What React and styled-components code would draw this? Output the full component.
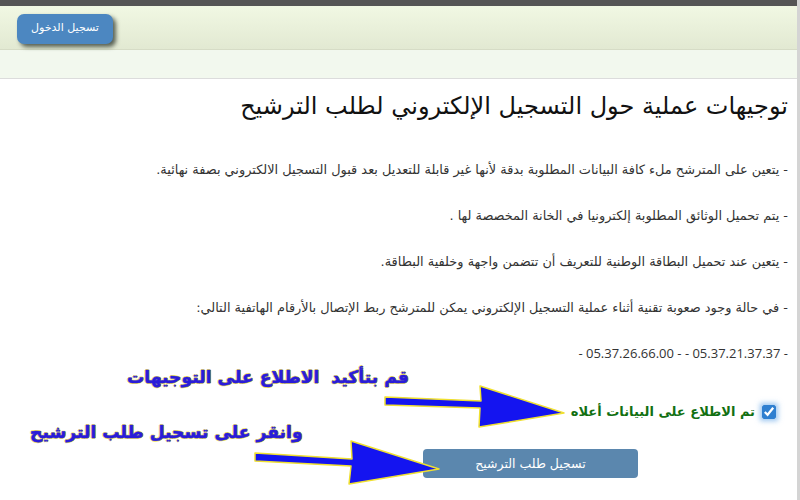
import React, { useState } from 'react';
import styled, { createGlobalStyle } from 'styled-components';

const GlobalStyle = createGlobalStyle`
  html, body {
    margin: 0;
    padding: 0;
    background: #ffffff;
  }
  body {
    font-family: "DejaVu Sans", "Noto Sans", sans-serif;
    width: 800px;
    height: 500px;
    overflow: hidden;
  }
`;

const Page = styled.div`
  position: relative;
  width: 797px;
  height: 500px;
  border-right: 3px solid #d4d4d4;
  background: #fff;
`;

const TopStrip = styled.div`
  height: 6px;
  background: #555555;
`;

const Header = styled.header`
  height: 44px;
  display: flex;
  align-items: flex-start;
  padding: 8px 0 0 17px;
  box-sizing: border-box;
  background: linear-gradient(#f1f8e3, #e2e9d2);
  border-bottom: 1px solid #d6dcc6;
`;

const LoginButton = styled.button`
  width: 96px;
  height: 30px;
  border: none;
  border-radius: 7px;
  background: #4c87c1;
  color: #fff;
  font-family: "DejaVu Sans", sans-serif;
  font-size: 11px;
  padding: 0 0 4px;
  box-shadow: 3px 3px 4px rgba(40, 50, 40, 0.75);
  cursor: pointer;
`;

const SubBar = styled.div`
  height: 28px;
  background: #f2f8ee;
  border-bottom: 1px solid #dcdcdc;
`;

const Content = styled.main`
  direction: rtl;
  padding: 10px 9px 0 0;
`;

const Title = styled.h1`
  margin: 0 0 36px;
  font-size: 24px;
  font-weight: normal;
  color: #111;
  line-height: 34px;
`;

const Para = styled.p`
  margin: 0 0 25px;
  font-size: 12.9px;
  line-height: 21px;
  color: #333;
`;

const Phones = styled(Para)`
  direction: ltr;
  text-align: right;
  font-family: "Open Sans", "DejaVu Sans", sans-serif;
  font-size: 13px;
  margin-bottom: 40px;
`;

const AgreeRow = styled.label`
  display: flex;
  align-items: center;
  gap: 7px;
  padding-right: 12px;
  color: #127012;
  font-weight: bold;
  font-size: 13px;
  cursor: pointer;
`;

const Check = styled.input`
  width: 14px;
  height: 14px;
  margin: 0;
  accent-color: #2f7fd0;
  box-shadow: 0 0 5px 2px rgba(90, 160, 230, 0.6);
`;

const SubmitRow = styled.div`
  display: flex;
  padding: 30px 150px 0 0;
`;

const SubmitButton = styled.button`
  width: 215px;
  height: 29px;
  border: none;
  border-radius: 4px;
  background: #5b87ae;
  color: #fff;
  font-family: "DejaVu Sans", sans-serif;
  font-size: 12.5px;
  cursor: pointer;
`;

const Note = styled.div`
  position: absolute;
  left: ${p => p.x}px;
  top: ${p => p.y}px;
  direction: rtl;
  font-family: "DejaVu Sans", sans-serif;
  font-weight: bold;
  font-size: 17.2px;
  color: #2a1cd8;
  white-space: nowrap;
  text-shadow: 1px 0 0 #f2e45a, -1px 0 0 #f2e45a, 0 1px 0 #f2e45a, 0 -1px 0 #f2e45a;
  -webkit-text-stroke: 0.6px #2a1cd8;
  pointer-events: none;
`;

const Overlay = styled.svg`
  position: absolute;
  left: 0;
  top: 0;
  pointer-events: none;
`;

const Arrow = ({ points }) => (
  <polygon
    points={points}
    fill="#1414f0"
    stroke="#f0e030"
    strokeWidth="1.5"
    strokeLinejoin="round"
  />
);

export default function App() {
  const [agreed, setAgreed] = useState(true);

  return (
    <>
      <GlobalStyle />
      <Page>
        <TopStrip />
        <Header>
          <LoginButton>تسجيل الدخول</LoginButton>
        </Header>
        <SubBar />
        <Content>
          <Title>توجيهات عملية حول التسجيل الإلكتروني لطلب الترشيح</Title>
          <Para>- يتعين على المترشح ملء كافة البيانات المطلوبة بدقة لأنها غير قابلة للتعديل بعد قبول التسجيل الالكتروني بصفة نهائية.</Para>
          <Para>- يتم تحميل الوثائق المطلوبة إلكترونيا في الخانة المخصصة لها .</Para>
          <Para>- يتعين عند تحميل البطاقة الوطنية للتعريف أن تتضمن واجهة وخلفية البطاقة.</Para>
          <Para>- في حالة وجود صعوبة تقنية أثناء عملية التسجيل الإلكتروني يمكن للمترشح ربط الإتصال بالأرقام الهاتفية التالي:</Para>
          <Phones>- 05.37.26.66.00 - - 05.37.21.37.37 -</Phones>
          <AgreeRow>
            <Check type="checkbox" checked={agreed} onChange={e => setAgreed(e.target.checked)} />
            تم الاطلاع على البيانات أعلاه
          </AgreeRow>
          <SubmitRow>
            <SubmitButton>تسجيل طلب الترشيح</SubmitButton>
          </SubmitRow>
        </Content>

        <Note x={127} y={367}>قم بتأكيد &nbsp;الاطلاع على التوجيهات</Note>
        <Note x={30} y={422}>وانقر على تسجيل طلب الترشيح</Note>

        <Overlay width="800" height="500" viewBox="0 0 800 500">
          <Arrow points="385,397 481,401 480,386 564,413 479,427 480,408 385,405" />
          <Arrow points="255,453 352,459 351,441 439,469 349,484 351,466 255,461" />
        </Overlay>
      </Page>
    </>
  );
}
